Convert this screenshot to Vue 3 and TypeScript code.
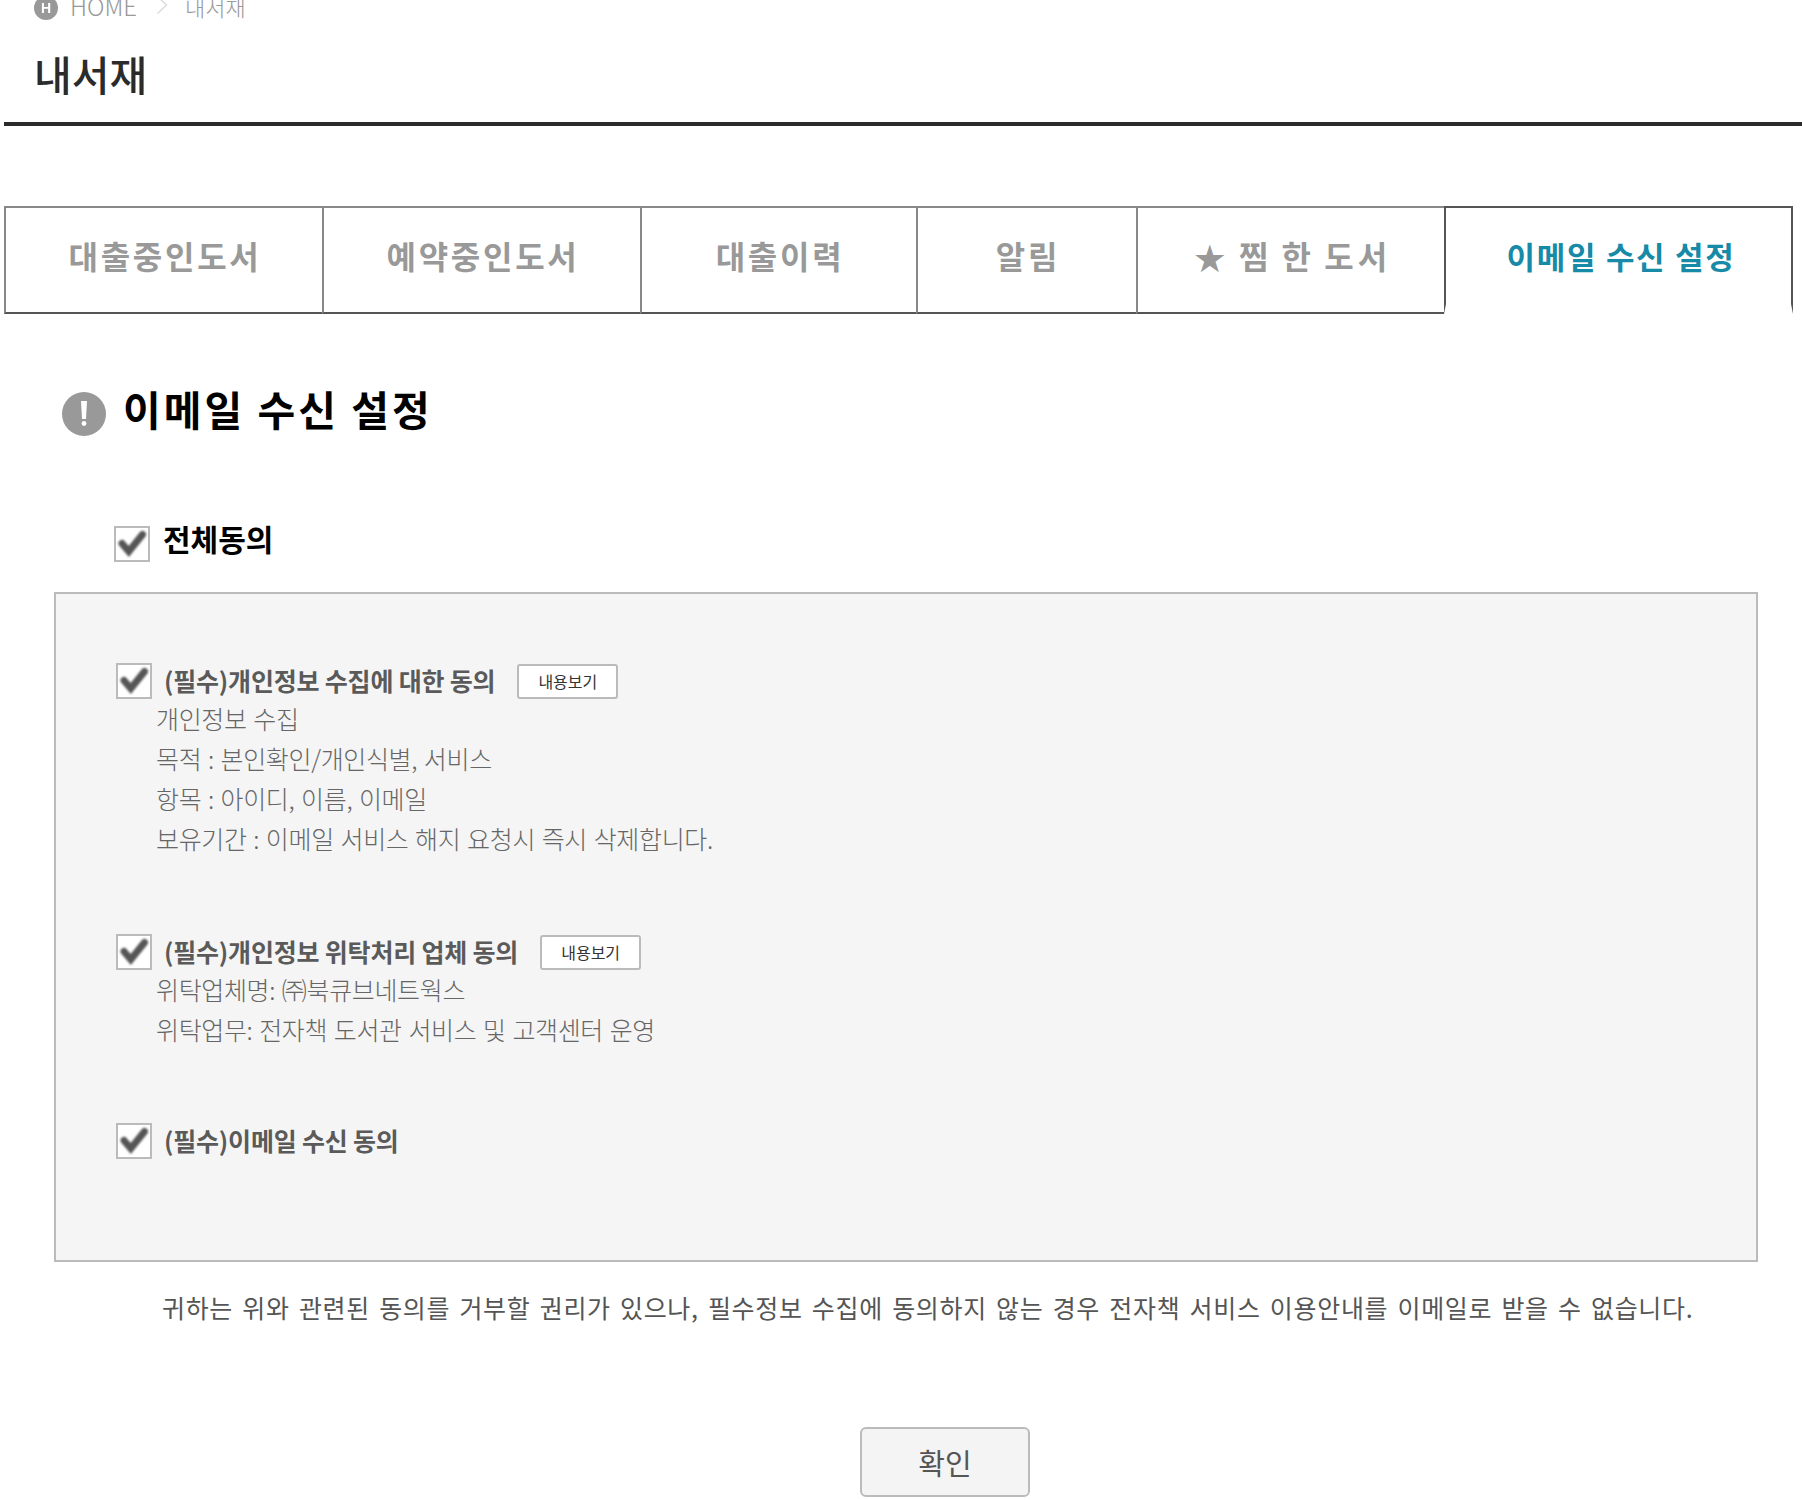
<script setup lang="ts">
interface Tab { label: string; cls: string; star?: boolean; active?: boolean }
interface Item { label: string; button: boolean; lines: string[]; cls: string }

const tabs: Tab[] = [
  { label: '대출중인도서', cls: 'w1' },
  { label: '예약중인도서', cls: 'w2' },
  { label: '대출이력', cls: 'w3' },
  { label: '알림', cls: 'w4' },
  { label: '찜 한 도서', cls: 'w5 wide', star: true },
  { label: '이메일 수신 설정', cls: 'w6', active: true },
]

const items: Item[] = [
  {
    label: '(필수)개인정보 수집에 대한 동의',
    button: true,
    cls: 'i1',
    lines: ['개인정보 수집', '목적 : 본인확인/개인식별, 서비스', '항목 : 아이디, 이름, 이메일', '보유기간 : 이메일 서비스 해지 요청시 즉시 삭제합니다.'],
  },
  {
    label: '(필수)개인정보 위탁처리 업체 동의',
    button: true,
    cls: 'i2',
    lines: ['위탁업체명: ㈜북큐브네트웍스', '위탁업무: 전자책 도서관 서비스 및 고객센터 운영'],
  },
  { label: '(필수)이메일 수신 동의', button: false, cls: 'i3', lines: [] },
]
</script>

<template>
  <div class="page">
    <div class="crumbs">
      <span class="home-icon">H</span>
      <span class="crumb">HOME</span>
      <svg class="chev" width="12" height="20" viewBox="0 0 12 20"><path d="M1.5 1.5 L10.5 10 L1.5 18.5" fill="none" stroke="#ddd" stroke-width="1.6" /></svg>
      <span class="crumb current">내서재</span>
    </div>
    <h1 class="title">내서재</h1>

    <div class="tabs">
      <div v-for="t in tabs" :key="t.label" class="tab" :class="[t.cls, { active: t.active }]">
        <span v-if="t.star" class="star">★</span>
        <span>{{ t.label }}</span>
      </div>
    </div>

    <div class="heading">
      <svg class="alert" width="46" height="46" viewBox="0 0 46 46">
        <circle cx="23" cy="23" r="22" fill="#999" />
        <path d="M20 10h6l-1 18h-4z" fill="#fff" />
        <circle cx="23" cy="32.5" r="2.4" fill="#fff" />
      </svg>
      <h2>이메일 수신 설정</h2>
    </div>

    <div class="all-row">
      <span class="check">
        <svg width="32" height="32" viewBox="0 0 32 32"><path d="M6 15.5 L12.8 23.5 L26.5 6.5" fill="none" stroke="#555" stroke-width="7" stroke-linecap="round" /></svg>
      </span>
      <span class="all-label">전체동의</span>
    </div>

    <div class="panel">
      <div v-for="it in items" :key="it.label" class="item" :class="it.cls">
        <div class="item-head">
          <span class="check">
            <svg width="32" height="32" viewBox="0 0 32 32"><path d="M6 15.5 L12.8 23.5 L26.5 6.5" fill="none" stroke="#555" stroke-width="7" stroke-linecap="round" /></svg>
          </span>
          <span class="item-label">{{ it.label }}</span>
          <button v-if="it.button" class="view-btn" type="button">내용보기</button>
        </div>
        <p v-for="l in it.lines" :key="l" class="line">{{ l }}</p>
      </div>
    </div>

    <p class="note">귀하는 위와 관련된 동의를 거부할 권리가 있으나, 필수정보 수집에 동의하지 않는 경우 전자책 서비스 이용안내를 이메일로 받을 수 없습니다.</p>

    <div class="actions">
      <button class="ok" type="button">확인</button>
    </div>
  </div>
</template>

<style>
html, body { margin: 0; background: #fff; }
</style>

<style scoped>
.page {
  width: 1802px;
  height: 1500px;
  overflow: hidden;
  box-sizing: border-box;
  font-family: "Noto Sans CJK KR", "Liberation Sans", sans-serif;
  color: #555;
}
.crumbs {
  height: 24px;
  margin-top: -4px;
  margin-bottom: -1px;
  padding-left: 34px;
  display: flex;
  align-items: center;
}
.home-icon {
  width: 24px;
  height: 24px;
  flex: none;
  border-radius: 50%;
  background: #999;
  color: #fff;
  font: bold 14px/24px "Liberation Sans", sans-serif;
  text-align: center;
  filter: blur(0.4px);
}
.crumb {
  margin: -4px 0 0 12px;
  font-size: 24px;
  font-weight: 300;
  line-height: 24px;
  color: #999;
}
.chev { margin: -6px 0 0 19px; }
.crumb.current { margin-left: 17px; font-size: 22px; }
.title {
  margin: 0 0 0 4px;
  padding: 28px 0 22px 30px;
  height: 53px;
  border-bottom: 4px solid #2b2b2b;
  font-size: 41px;
  line-height: 53px;
  font-weight: 500;
  color: #2b2b2b;
}
.tabs {
  margin: 80px 0 0 4px;
  display: flex;
  height: 108px;
}
.tab {
  box-sizing: border-box;
  height: 108px;
  border-top: 2px solid #888;
  border-left: 2px solid #888;
  border-bottom: 2px solid #555;
  display: flex;
  align-items: center;
  justify-content: center;
  padding: 0 0 10px 2px;
  font-size: 32px;
  font-weight: 700;
  letter-spacing: 2.7px;
  color: #999;
}
.w1 { width: 318px; }
.w2 { width: 318px; }
.w3 { width: 276px; }
.w4 { width: 220px; }
.w5 { width: 308px; }
.w6 { width: 349px; }
.wide { letter-spacing: 4px; word-spacing: -2px; padding-bottom: 10px; }
.star { font-size: 38px; letter-spacing: 0; margin-right: 12px; padding-top: 8px; font-family: "DejaVu Sans", sans-serif; }
.tab.active {
  border-top-color: #555;
  border-left-color: #555;
  border-right: 2px solid #555;
  border-bottom: 10px solid #fff;
  padding: 0 0 2px 5px;
  font-size: 31px;
  letter-spacing: 1.7px;
  color: #168aa6;
}
.heading {
  margin: 77px 0 0 61px;
  display: flex;
  align-items: flex-start;
  height: 46px;
}
.alert { filter: blur(0.5px); }
.heading h2 {
  margin: -9px 0 0 16px;
  font-size: 41px;
  line-height: 52px;
  font-weight: 700;
  letter-spacing: 3px;
  color: #000;
}
.all-row {
  margin: 89px 0 0 114px;
  display: flex;
  align-items: center;
  height: 36px;
}
.check {
  box-sizing: border-box;
  width: 36px;
  height: 36px;
  flex: none;
  border: 2px solid #bbb;
  background: #fff;
  display: block;
}
.check svg { display: block; filter: blur(0.9px); }
.all-label {
  margin: -13px 0 0 13px;
  font-size: 30px;
  line-height: 36px;
  font-weight: 700;
  color: #000;
}
.panel {
  box-sizing: border-box;
  margin: 30px 0 0 54px;
  width: 1704px;
  height: 670px;
  border: 2px solid #bbb;
  background: #f5f5f5;
  padding: 69px 0 0 60px;
}
.item-head {
  display: flex;
  align-items: center;
  height: 36px;
  margin-bottom: -1px;
}
.item-label {
  margin: -2px 0 0 12px;
  font-size: 25px;
  line-height: 36px;
  font-weight: 700;
  letter-spacing: -0.2px;
  color: #5a5a5a;
}
.view-btn {
  box-sizing: border-box;
  margin-left: 22px;
  width: 101px;
  height: 35px;
  padding: 0;
  border: 2px solid #bbb;
  border-radius: 3px;
  background: #fff;
  font-family: inherit;
  font-size: 16px;
  color: #333;
}
.line {
  margin: 0 0 0 40px;
  font-size: 25px;
  line-height: 40px;
  font-weight: 300;
  letter-spacing: -0.35px;
  word-spacing: 1.5px;
  color: #666;
}
.item.i2 { margin-top: 76px; }
.item.i3 { margin-top: 74px; }
.note {
  margin: 26px 0 0 0;
  padding-left: 162px;
  font-size: 25px;
  line-height: 38px;
  font-weight: 400;
  letter-spacing: 0.67px;
  word-spacing: 3px;
  color: #555;
  white-space: nowrap;
}
.actions {
  margin: 101px 0 0 860px;
}
.ok {
  box-sizing: border-box;
  width: 170px;
  height: 70px;
  padding: 0;
  border: 2px solid #bbb;
  border-radius: 6px;
  background: #f4f4f4;
  font-family: inherit;
  font-size: 29px;
  color: #555;
}
</style>
